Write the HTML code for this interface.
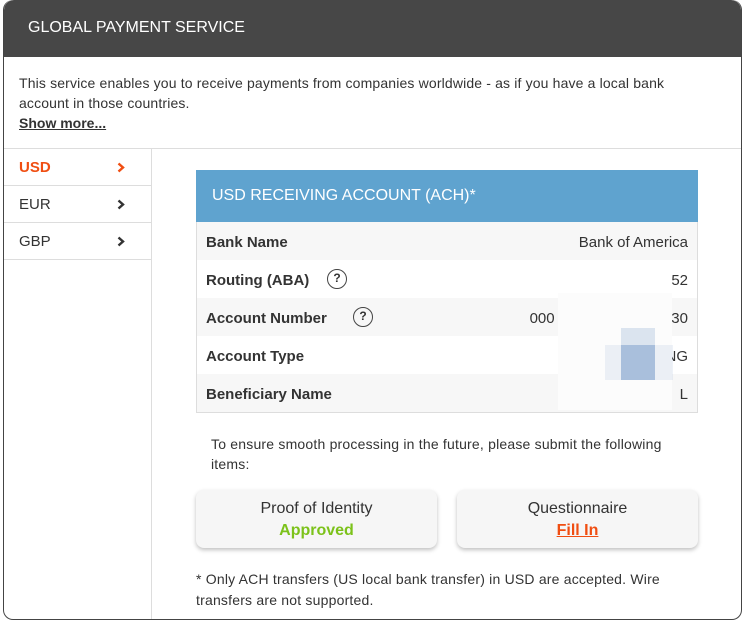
<!DOCTYPE html>
<html><head><style>
*{box-sizing:border-box;margin:0;padding:0}
body{width:742px;height:622px;background:#fff;font-family:"Liberation Sans",sans-serif;color:#333;position:relative;overflow:hidden}
.frame{position:absolute;left:3px;top:0;width:739px;height:620px;border:1px solid #444;border-top:none;border-radius:10px 10px 10px 10px;overflow:hidden}
.hdr{position:absolute;left:0;top:0;width:100%;height:57px;background:#474747;color:#fff;font-size:16px;padding:19px 0 0 24px;border-radius:10px 10px 0 0}
.intro{position:absolute;left:15px;top:73px;font-size:14px;line-height:20px;width:670px;letter-spacing:0.15px}
.intro b{text-decoration:underline;font-weight:bold;letter-spacing:0}
.hline{position:absolute;left:0;top:148px;width:100%;height:1px;background:#ddd}
.side{position:absolute;left:0;top:149px;width:148px;border-right:1px solid #ddd;height:480px}
.tab{height:37px;border-bottom:1px solid #ddd;font-size:15px;padding:10px 0 0 15px;position:relative}
.tab svg{position:absolute;left:113px;top:13px}
.card{position:absolute;left:196px;top:170px;width:502px;border:1px solid #ddd;border-top:none}
.ch{background:#5fa3cf;color:#fff;height:52px;font-size:16px;padding:17px 0 0 16px;margin:0 -1px}
.row{height:38px;font-size:15px;font-weight:bold;padding:12px 9px 0;position:relative;color:#333}
.row:nth-child(odd){background:#f7f7f7}
.row .v{position:absolute;right:9px;top:12px;font-weight:normal}
.q{position:absolute;top:9px;width:20px;height:20px;border:1.5px solid #444;border-radius:50%;font-size:12px;text-align:center;line-height:17px}
.blur{position:absolute;left:558px;top:293px;width:114px;height:117px;background:#fcfcfc}
.px{position:absolute;background:#a9c0dc}
.note{position:absolute;left:211px;top:434px;font-size:14px;line-height:20px;width:470px;letter-spacing:0.2px}
.btn{position:absolute;top:490px;width:241px;height:58px;background:#f6f6f6;border-radius:8px;box-shadow:0 2px 4px rgba(0,0,0,.25);text-align:center;font-size:16px;padding-top:8px;line-height:22px}
.foot{position:absolute;left:196px;top:569px;font-size:14px;line-height:21px;width:470px;letter-spacing:0.2px}
</style></head><body>
<div class="frame">
<div class="hdr">GLOBAL PAYMENT SERVICE</div>
<div class="intro">This service enables you to receive payments from companies worldwide - as if you have a local bank account in those countries.<br><b>Show more...</b></div>
<div class="hline"></div>
<div class="side">
<div class="tab" style="color:#f04e12;font-weight:bold">USD<svg width="8" height="11" viewBox="0 0 8 11"><path d="M1.5 1.5L6 5.5L1.5 9.5" fill="none" stroke="#f04e12" stroke-width="2.4"/></svg></div>
<div class="tab">EUR<svg width="8" height="11" viewBox="0 0 8 11"><path d="M1.5 1.5L6 5.5L1.5 9.5" fill="none" stroke="#333" stroke-width="2.4"/></svg></div>
<div class="tab">GBP<svg width="8" height="11" viewBox="0 0 8 11"><path d="M1.5 1.5L6 5.5L1.5 9.5" fill="none" stroke="#333" stroke-width="2.4"/></svg></div>
</div>
</div>
<div class="card">
<div class="ch">USD RECEIVING ACCOUNT (ACH)*</div>
<div>
<div class="row">Bank Name<span class="v">Bank of America</span></div>
<div class="row">Routing (ABA)<span class="q" style="left:130px">?</span><span class="v">52</span></div>
<div class="row">Account Number<span class="q" style="left:156px">?</span><span class="v">000&nbsp;&nbsp;&nbsp;&nbsp;&nbsp;&nbsp;&nbsp;&nbsp;&nbsp;&nbsp;&nbsp;&nbsp;&nbsp;&nbsp;&nbsp;&nbsp;&nbsp;&nbsp;&nbsp;&nbsp;&nbsp;&nbsp;&nbsp;&nbsp;&nbsp;&nbsp;&nbsp;&nbsp;30</span></div>
<div class="row">Account Type<span class="v">NG</span></div>
<div class="row">Beneficiary Name<span class="v">L</span></div>
</div>
</div>
<div class="blur"></div>
<div class="px" style="left:621px;top:328px;width:34px;height:52px;opacity:.4"></div>
<div class="px" style="left:621px;top:345px;width:34px;height:35px"></div>
<div class="px" style="left:605px;top:345px;width:68px;height:35px;opacity:.2"></div>
<div class="note">To ensure smooth processing in the future, please submit the following items:</div>
<div class="btn" style="left:196px">Proof of Identity<br><b style="color:#7cc21a">Approved</b></div>
<div class="btn" style="left:457px">Questionnaire<br><b style="color:#f04e12;text-decoration:underline">Fill In</b></div>
<div class="foot">* Only ACH transfers (US local bank transfer) in USD are accepted. Wire transfers are not supported.</div>
</body></html>
